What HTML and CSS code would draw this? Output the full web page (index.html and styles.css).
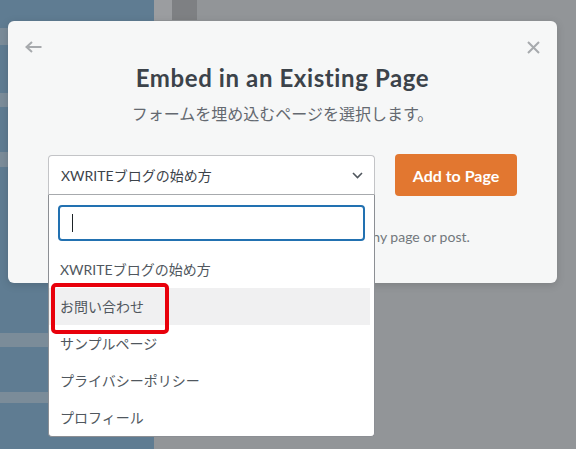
FILE: index.html
```html
<!DOCTYPE html>
<html lang="ja">
<head>
  <meta charset="UTF-8">
  <meta name="viewport" content="width=device-width, initial-scale=1.0">
  <title>Embed in an Existing Page</title>
  <link rel="stylesheet" href="styles.css">
</head>
<body>
  <!-- 管理画面（暗くした背景） -->
  <div class="admin">
    <aside class="admin-menu">
      <div class="menu-group" style="height:28px"></div>
      <div class="menu-sep" style="height:17px"></div>
      <div class="menu-group" style="height:48px"></div>
      <div class="menu-sep" style="height:14px"></div>
      <div class="menu-group" style="height:45px"></div>
      <div class="menu-sep" style="height:15px"></div>
      <div class="menu-group" style="height:166px"></div>
      <div class="menu-sep" style="height:14px"></div>
      <div class="menu-group" style="height:45px"></div>
      <div class="menu-sep" style="height:11px"></div>
    </aside>
    <main class="admin-main">
      <div class="admin-top">
        <span class="top-light"></span>
        <span class="top-dark"></span>
      </div>
    </main>
  </div>

  <!-- 埋め込みモーダル -->
  <div class="modal">
    <div class="modal-head">
      <svg class="icon-back" width="17" height="12" viewBox="0 0 17 12">
        <path d="M7 1 L1.5 6 L7 11 M1.5 6 H16.5" fill="none" stroke="#a7aaad" stroke-width="2"/>
      </svg>
      <svg class="icon-close" width="13" height="13" viewBox="0 0 13 13">
        <path d="M1 1 L12 12 M12 1 L1 12" fill="none" stroke="#a7aaad" stroke-width="2"/>
      </svg>
    </div>
    <h2>Embed in an Existing Page</h2>
    <p class="subtitle">フォームを埋め込むページを選択します。</p>

    <div class="embed-row">
      <div class="page-select">
        <div class="select-box">
          <span>XWRITEブログの始め方</span>
          <svg width="11" height="7" viewBox="0 0 11 7">
            <path d="M1 1 L5.5 5.5 L10 1" fill="none" stroke="#50575e" stroke-width="1.6"/>
          </svg>
        </div>
        <div class="dropdown">
          <div class="search"><span class="caret"></span></div>
          <ul class="options">
            <li>XWRITEブログの始め方</li>
            <li class="active">お問い合わせ</li>
            <li>サンプルページ</li>
            <li>プライバシーポリシー</li>
            <li>プロフィール</li>
          </ul>
        </div>
      </div>
      <button class="add-btn">Add to Page</button>
    </div>

    <p class="note">You can also use the shortcode to embed in any page or post.</p>
  </div>
</body>
</html>
```

FILE: styles.css
```css
* {
  box-sizing: border-box;
}
html, body {
  margin: 0;
  height: 100%;
}
body {
  font-family: Lato, "Noto Sans CJK JP", sans-serif;
  background: #929598;
  overflow: hidden;
}

/* 背景 */
.admin {
  display: flex;
  height: 449px;
}
.admin-menu {
  width: 154px;
  background: #5f7c92;
  display: flex;
  flex-direction: column;
}
.menu-sep {
  background: #7b8c99;
}
.admin-main {
  flex: 1;
}
.admin-top {
  display: flex;
  height: 20px;
}
.top-light {
  width: 18px;
  background: #9b9da0;
}
.top-dark {
  width: 25px;
  background: #7e8083;
}

/* モーダル */
.modal {
  position: absolute;
  left: 8px;
  top: 21px;
  width: 549px;
  background: #f6f7f7;
  border-radius: 6px;
  padding: 20px 17px 36px;
  box-shadow: 0 2px 8px rgba(0, 0, 0, 0.15);
}
.modal-head {
  display: flex;
  justify-content: space-between;
  align-items: center;
  height: 12px;
}
h2 {
  margin: 10px 0 0;
  font-size: 24px;
  line-height: 30px;
  letter-spacing: 0.6px;
  font-weight: 700;
  color: #3c434a;
  text-align: center;
}
.subtitle {
  margin: 10px 0 0;
  font-size: 16px;
  line-height: 22px;
  color: #646970;
  text-align: center;
}
.embed-row {
  display: flex;
  justify-content: center;
  align-items: center;
  gap: 20px;
  margin-top: 29px;
}
.page-select {
  position: relative;
  width: 327px;
}
.select-box {
  height: 40px;
  background: #fff;
  border: 1px solid #c3c4c7;
  border-bottom-color: #a7aaad;
  border-radius: 4px 4px 0 0;
  display: flex;
  align-items: center;
  justify-content: space-between;
  padding: 0 11px 0 12px;
  font-size: 14px;
  color: #3c434a;
}
.add-btn {
  width: 122px;
  height: 42px;
  background: #e27730;
  color: #fff;
  border: none;
  border-radius: 4px;
  font-family: Lato, sans-serif;
  font-size: 16px;
  font-weight: 700;
}

/* ドロップダウン */
.dropdown {
  position: absolute;
  top: 100%;
  left: 0;
  right: 0;
  background: #fff;
  border: 1px solid #8c8f94;
  border-top: none;
  border-radius: 0 0 4px 4px;
  padding-top: 10px;
  z-index: 2;
}
.search {
  margin: 0 9px 10px;
  height: 36px;
  border: 2px solid #2271b1;
  border-radius: 4px;
  padding-left: 12px;
  display: flex;
  align-items: center;
}
.caret {
  width: 1px;
  height: 18px;
  background: #1d2327;
}
.options {
  list-style: none;
  margin: 0;
  padding: 0 4px 0 0;
}
.options li {
  height: 37px;
  line-height: 37px;
  padding-left: 11px;
  font-size: 14px;
  color: #50575e;
}
.options li.active {
  position: relative;
  background: #f0f0f1;
}
.options li.active::after {
  content: "";
  position: absolute;
  left: 2px;
  top: -5px;
  width: 110px;
  height: 43px;
  border: 4px solid #e8000b;
  border-radius: 5px;
}
.note {
  margin: 31px 0 0;
  font-size: 14px;
  line-height: 20px;
  color: #72777c;
  text-align: center;
}
```
